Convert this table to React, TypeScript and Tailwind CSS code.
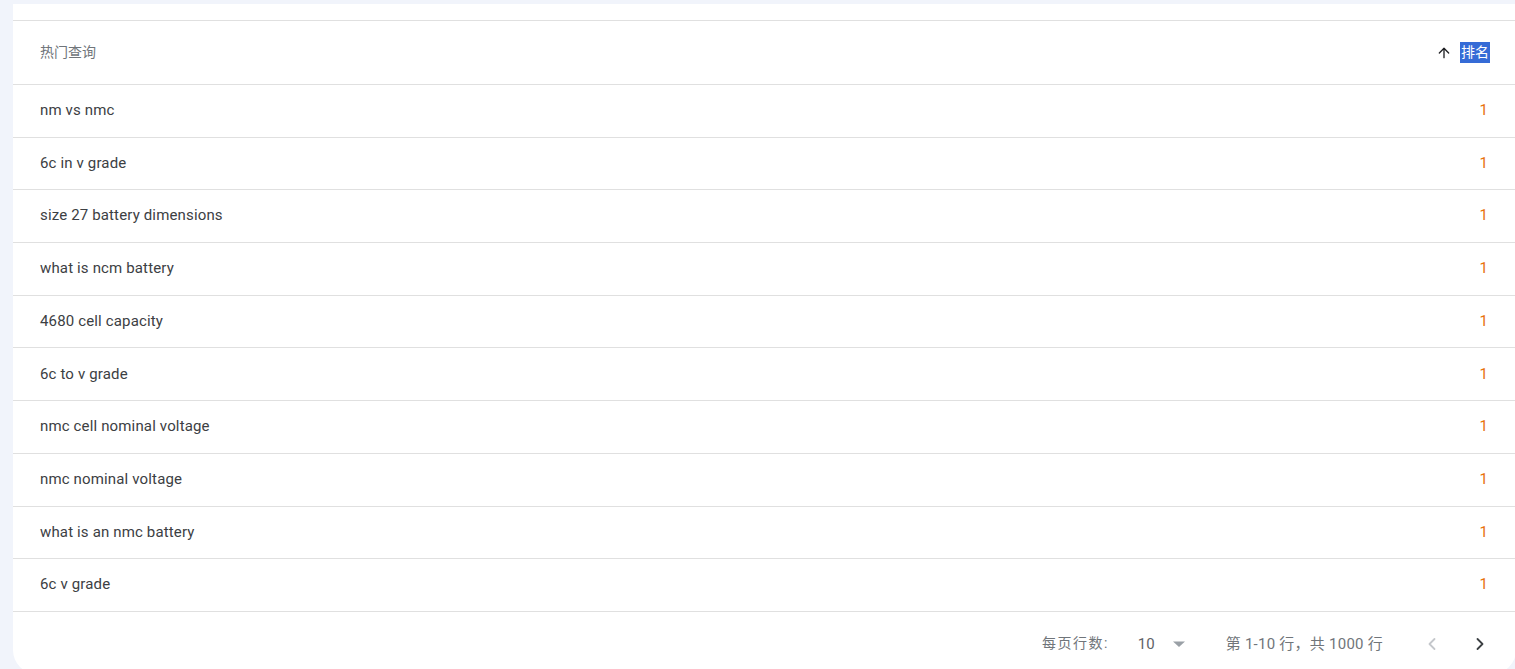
import { ArrowUp, ChevronLeft, ChevronRight } from 'lucide-react'

const QUERIES: string[] = [
  'nm vs nmc',
  '6c in v grade',
  'size 27 battery dimensions',
  'what is ncm battery',
  '4680 cell capacity',
  '6c to v grade',
  'nmc cell nominal voltage',
  'nmc nominal voltage',
  'what is an nmc battery',
  '6c v grade',
]

const FONT = "font-['Roboto','Noto_Sans_CJK_SC',sans-serif]"

export default function App() {
  return (
    <div className={`h-[669px] w-full overflow-hidden bg-[#f1f4fb] pt-1 pl-[13px] ${FONT}`}>
      <div className="w-[1503px] rounded-b-3xl bg-white pt-4">
        {/* Header */}
        <div className="flex h-[65px] items-center justify-between border-y border-[#e0e0e0] pl-[27px] pr-[26px]">
          <span className="text-[14px] text-[#70757a]">热门查询</span>
          <div className="flex items-center gap-[8px]">
            <ArrowUp className="h-4 w-4 text-[#202124]" strokeWidth={2} />
            <span className="bg-[#356bd6] px-px text-[14px] leading-[21px] text-white">排名</span>
          </div>
        </div>

        {/* Rows */}
        {QUERIES.map((q) => (
          <div
            key={q}
            className="flex h-[52.7px] items-center justify-between border-b border-[#e0e0e0] pb-px pl-[27px] pr-[28px] text-[15px] tracking-[0.15px]"
          >
            <span className="text-[#3c4043]">{q}</span>
            <span className="text-[#e8710a]">1</span>
          </div>
        ))}

        {/* Footer */}
        <div className="flex h-[62px] items-center justify-end pt-0.5 pr-[26px] text-[14px] text-[#70757a]">
          <span className="tracking-[1.5px]">每页行数:</span>
          <span className="ml-[29px] text-[15px] text-[#5f6368]">10</span>
          <svg className="ml-[17px]" width="14" height="8" viewBox="0 0 14 8">
            <path d="M1 1.5 L7 7 L13 1.5 Z" fill="#9aa0a6" />
          </svg>
          <span className="ml-[40px] text-[15px] tracking-[0.25px]">第 1-10 行，共 1000 行</span>
          <ChevronLeft className="ml-[39px] h-5 w-5 text-[#c4c7cb]" strokeWidth={2.2} />
          <ChevronRight className="ml-[28px] h-5 w-5 text-[#3c4043]" strokeWidth={2.2} />
        </div>
      </div>
    </div>
  )
}
